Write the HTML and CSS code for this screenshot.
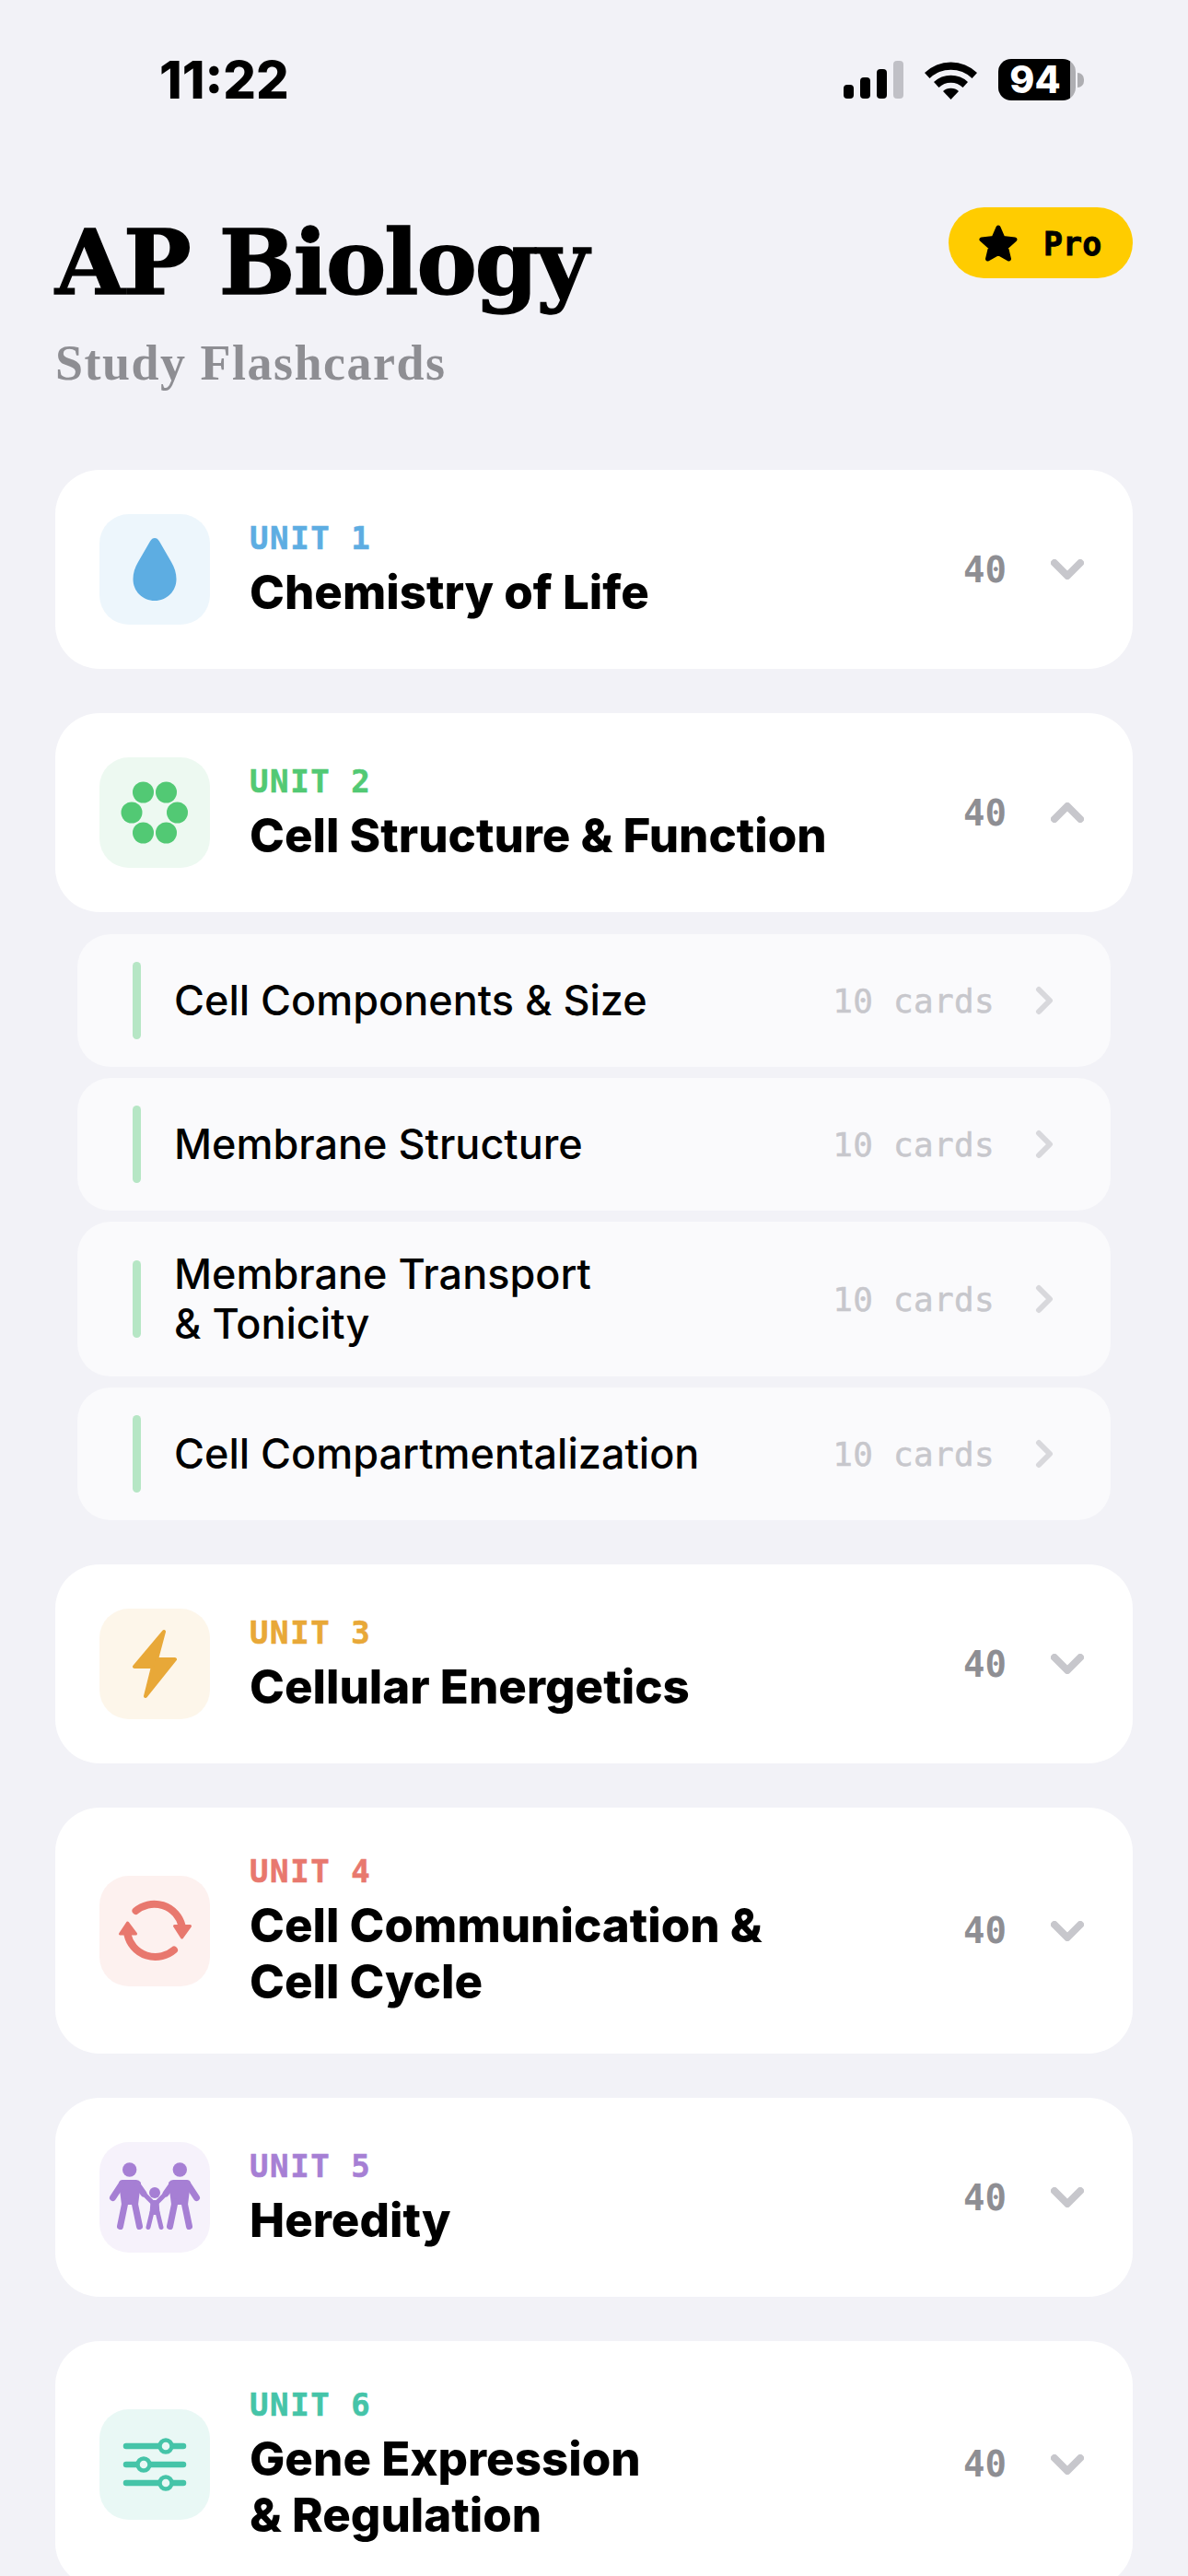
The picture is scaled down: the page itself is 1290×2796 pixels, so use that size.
FILE: index.html
```html
<!DOCTYPE html>
<html lang="en">
<head>
    <meta charset="UTF-8">
    <meta name="viewport" content="width=device-width, initial-scale=1.0">
    <title>AP Biology</title>
    <link rel="stylesheet" href="styles.css">
</head>
<body>
    <div class="status-bar">
        <span class="time">11:22</span>
        <div class="status-icons">
            <svg class="signal" width="65" height="41" viewBox="0 0 65 41">
                <rect x="0" y="26" width="11" height="15" rx="4"/>
                <rect x="18" y="18" width="11" height="23" rx="4"/>
                <rect x="36" y="9" width="11" height="32" rx="4"/>
                <rect x="54" y="0" width="11" height="41" rx="4" fill="#c0c0c6"/>
            </svg>
            <svg class="wifi" width="57" height="42" viewBox="0 0 57 42">
                <path d="M0 13 A41 41 0 0 1 57 13 L51.500 19 A33 33 0 0 0 5.500 19 Z"/>
                <path d="M10 23 A27 27 0 0 1 47 23 L41.500 29 A19 19 0 0 0 15.500 29 Z"/>
                <path d="M20 33 A13 13 0 0 1 37 33 L28.500 42 Z"/>
            </svg>
            <div class="battery"><span class="battery-level">94</span><span class="battery-nub"></span></div>
        </div>
    </div>

    <header class="page-head">
        <div>
            <h1>AP Biology</h1>
            <p class="subtitle">Study Flashcards</p>
        </div>
        <div class="pro-badge">
            <svg width="44" height="42" viewBox="0 0 44 42">
                <path d="M22 4 L27 15.500 L40 17 L30.500 25.500 L33.500 38 L22 31.500 L10.500 38 L13.500 25.500 L4 17 L17 15.500 Z" fill="#000" stroke="#000" stroke-width="5" stroke-linejoin="round"/>
            </svg>
            <span>Pro</span>
        </div>
    </header>

    <main class="units">
        <div class="card unit-blue">
            <div class="icon-box">
                <svg width="120" height="120" viewBox="0 0 120 120">
                    <path d="M60 26 C62 26 63.500 27 65 29.500 L78 52 C81.500 58 83.500 64 83.500 70.500 C83.500 84 73 94 60 94 S36.500 84 36.500 70.500 C36.500 64 38.500 58 42 52 L55 29.500 C56.500 27 58 26 60 26 Z" fill="currentColor"/>
                </svg>
            </div>
            <div class="card-text">
                <div class="unit-label">UNIT 1</div>
                <div class="unit-title">Chemistry of Life</div>
            </div>
            <span class="count">40</span>
            <svg class="chevron" width="36" height="22" viewBox="0 0 36 22"><polyline points="4,4 18,18 32,4"/></svg>
        </div>

        <div class="unit-group">
            <div class="card unit-green">
                <div class="icon-box">
                    <svg width="120" height="120" viewBox="0 0 120 120" fill="currentColor">
                        <circle cx="47.500" cy="38" r="11.500"/>
                        <circle cx="72.500" cy="38" r="11.500"/>
                        <circle cx="35" cy="60" r="11.500"/>
                        <circle cx="84.500" cy="60" r="11.500"/>
                        <circle cx="47.500" cy="82" r="11.500"/>
                        <circle cx="72.500" cy="82" r="11.500"/>
                    </svg>
                </div>
                <div class="card-text">
                    <div class="unit-label">UNIT 2</div>
                    <div class="unit-title">Cell Structure &amp; Function</div>
                </div>
                <span class="count">40</span>
                <svg class="chevron" width="36" height="22" viewBox="0 0 36 22"><polyline points="4,18 18,4 32,18"/></svg>
            </div>

            <div class="topics">
                <div class="topic">
                    <span class="topic-bar"></span>
                    <div class="topic-name">Cell Components &amp; Size</div>
                    <span class="topic-count">10 cards</span>
                    <svg class="topic-chevron" width="20" height="32" viewBox="0 0 20 32"><polyline points="4,4 16,16 4,28"/></svg>
                </div>
                <div class="topic">
                    <span class="topic-bar"></span>
                    <div class="topic-name">Membrane Structure</div>
                    <span class="topic-count">10 cards</span>
                    <svg class="topic-chevron" width="20" height="32" viewBox="0 0 20 32"><polyline points="4,4 16,16 4,28"/></svg>
                </div>
                <div class="topic">
                    <span class="topic-bar"></span>
                    <div class="topic-name">Membrane Transport<br>&amp; Tonicity</div>
                    <span class="topic-count">10 cards</span>
                    <svg class="topic-chevron" width="20" height="32" viewBox="0 0 20 32"><polyline points="4,4 16,16 4,28"/></svg>
                </div>
                <div class="topic">
                    <span class="topic-bar"></span>
                    <div class="topic-name">Cell Compartmentalization</div>
                    <span class="topic-count">10 cards</span>
                    <svg class="topic-chevron" width="20" height="32" viewBox="0 0 20 32"><polyline points="4,4 16,16 4,28"/></svg>
                </div>
            </div>
        </div>

        <div class="card unit-orange">
            <div class="icon-box">
                <svg width="120" height="120" viewBox="0 0 120 120">
                    <path d="M70 25 L38 63 H58 L50 95 L82 55 H62 Z" fill="currentColor" stroke="currentColor" stroke-width="4" stroke-linejoin="round"/>
                </svg>
            </div>
            <div class="card-text">
                <div class="unit-label">UNIT 3</div>
                <div class="unit-title">Cellular Energetics</div>
            </div>
            <span class="count">40</span>
            <svg class="chevron" width="36" height="22" viewBox="0 0 36 22"><polyline points="4,4 18,18 32,4"/></svg>
        </div>

        <div class="card unit-red">
            <div class="icon-box">
                <svg width="120" height="120" viewBox="0 0 120 120" fill="none" stroke="currentColor">
                    <path d="M39.500 38 A31 31 0 0 1 89.500 54" stroke-width="8" stroke-linecap="round"/>
                    <path d="M81 80.500 A31 31 0 0 1 30.500 64" stroke-width="8" stroke-linecap="round"/>
                    <path d="M81.500 54.500 H98.500 L89.500 67 Z" fill="currentColor" stroke-width="3" stroke-linejoin="round"/>
                    <path d="M22.500 63 H39.500 L30.500 51 Z" fill="currentColor" stroke-width="3" stroke-linejoin="round"/>
                </svg>
            </div>
            <div class="card-text">
                <div class="unit-label">UNIT 4</div>
                <div class="unit-title">Cell Communication &amp;<br>Cell Cycle</div>
            </div>
            <span class="count">40</span>
            <svg class="chevron" width="36" height="22" viewBox="0 0 36 22"><polyline points="4,4 18,18 32,4"/></svg>
        </div>

        <div class="card unit-purple">
            <div class="icon-box">
                <svg width="120" height="120" viewBox="0 0 120 120" fill="currentColor" stroke="currentColor" stroke-linecap="round">
                    <circle cx="32.700" cy="30" r="7.700" stroke="none"/>
                    <circle cx="87.300" cy="30" r="7.700" stroke="none"/>
                    <circle cx="60" cy="55" r="6" stroke="none"/>
                    <path d="M25 41 H40 Q43 41 45 44 L42 68 H24 L21 44 Q22 41 25 41 Z" stroke="none"/>
                    <path d="M95 41 H80 Q77 41 75 44 L78 68 H96 L99 44 Q98 41 95 41 Z" stroke="none"/>
                    <path d="M24 46 L14.500 60.500 M41 46 L48 56 M28 65 L22.500 91.500 M38 65 L43.500 91.500" fill="none" stroke-width="7"/>
                    <path d="M96 46 L105.500 60.500 M79 46 L72 56 M92 65 L97.500 91.500 M82 65 L76.500 91.500" fill="none" stroke-width="7"/>
                    <path d="M56.500 64 H63.500 L64.500 78 H55.500 Z" stroke-width="2" stroke-linejoin="round"/>
                    <path d="M50 58 L57 65 M70 58 L63 65 M57 76 L53 92.500 M63 76 L67 92.500" fill="none" stroke-width="5"/>
                </svg>
            </div>
            <div class="card-text">
                <div class="unit-label">UNIT 5</div>
                <div class="unit-title">Heredity</div>
            </div>
            <span class="count">40</span>
            <svg class="chevron" width="36" height="22" viewBox="0 0 36 22"><polyline points="4,4 18,18 32,4"/></svg>
        </div>

        <div class="card unit-teal">
            <div class="icon-box">
                <svg width="120" height="120" viewBox="0 0 120 120" stroke="currentColor" fill="none">
                    <path d="M29 40 H91 M29 60 H91 M29 80 H91" stroke-width="6.500" stroke-linecap="round"/>
                    <circle class="knob" cx="72" cy="40" r="6.500" stroke-width="4.500"/>
                    <circle class="knob" cx="48" cy="60" r="6.500" stroke-width="4.500"/>
                    <circle class="knob" cx="72" cy="80" r="6.500" stroke-width="4.500"/>
                </svg>
            </div>
            <div class="card-text">
                <div class="unit-label">UNIT 6</div>
                <div class="unit-title">Gene Expression<br>&amp; Regulation</div>
            </div>
            <span class="count">40</span>
            <svg class="chevron" width="36" height="22" viewBox="0 0 36 22"><polyline points="4,4 18,18 32,4"/></svg>
        </div>
    </main>
</body>
</html>
```

FILE: styles.css
```css
html, body {
    height: 2796px;
    overflow: hidden;
}
body {
    margin: 0;
    background-color: #f2f2f7;
    font-family: Inter, "Liberation Sans", sans-serif;
    color: #000;
}
.status-bar {
    display: flex;
    justify-content: space-between;
    align-items: center;
    height: 45px;
    padding: 64px 113px 0 173px;
}
.time {
    font-size: 56px;
    font-weight: 800;
    line-height: 45px;
    padding-top: 2px;
}
.status-icons {
    display: flex;
    align-items: center;
    gap: 23px;
}
.battery {
    display: flex;
    align-items: center;
    gap: 2px;
}
.battery-level {
    width: 84px;
    height: 45px;
    border-radius: 14px;
    background: linear-gradient(90deg, #000 93%, #aeaeb2 93%);
    color: #fff;
    font-size: 41px;
    font-weight: 800;
    line-height: 45px;
    text-align: center;
    text-indent: -4px;
}
.battery-nub {
    width: 7px;
    height: 16px;
    border-radius: 0 8px 8px 0;
    background-color: #aeaeb2;
}
.page-head {
    display: flex;
    justify-content: space-between;
    align-items: flex-start;
    padding: 116px 60px 0;
}
h1 {
    margin: 0;
    font-family: "DejaVu Serif", serif;
    font-size: 98px;
    font-weight: 700;
    line-height: 120px;
    letter-spacing: -2px;
    -webkit-text-stroke: 1.5px #000;
}
.subtitle {
    margin: 18px 0 0;
    font-family: "Liberation Serif", serif;
    font-size: 54px;
    font-weight: 700;
    line-height: 62px;
    letter-spacing: 1.500px;
    color: #8e8e93;
}
.pro-badge {
    display: flex;
    align-items: center;
    gap: 27px;
    box-sizing: border-box;
    width: 200px;
    height: 77px;
    padding-left: 32px;
    border-radius: 39px;
    background-color: #ffcc00;
    font-family: "DejaVu Sans Mono", monospace;
    font-size: 35px;
    font-weight: 700;
    -webkit-text-stroke: 0.8px #000;
}
.pro-badge span {
    margin-top: 3px;
}
.units {
    display: flex;
    flex-direction: column;
    gap: 48px;
    padding: 0 60px;
    margin-top: 85px;
}
.card {
    display: flex;
    align-items: center;
    padding: 48px 53px 48px 48px;
    border-radius: 48px;
    background-color: #fff;
}
.icon-box {
    flex: none;
    width: 120px;
    height: 120px;
    border-radius: 32px;
}
.icon-box svg {
    display: block;
}
.card-text {
    flex: 1;
    margin-left: 43px;
}
.unit-label {
    margin-bottom: 6px;
    font-family: "DejaVu Sans Mono", monospace;
    font-size: 34px;
    font-weight: 700;
    line-height: 43px;
    letter-spacing: 1.6px;
    -webkit-text-stroke: 0.6px currentColor;
}
.unit-title {
    font-size: 51px;
    font-weight: 800;
    line-height: 61px;
}
.count {
    margin-right: 48px;
    font-family: "DejaVu Sans Mono", monospace;
    font-size: 39px;
    font-weight: 700;
    color: #8e8e93;
}
.chevron {
    flex: none;
    fill: none;
    stroke: #c7c7cc;
    stroke-width: 8;
    stroke-linecap: round;
    stroke-linejoin: round;
}
.unit-blue .icon-box { background-color: #edf6fc; }
.unit-blue .icon-box, .unit-blue .unit-label { color: #5dade2; }
.unit-green .icon-box { background-color: #edf9f1; }
.unit-green .icon-box, .unit-green .unit-label { color: #52c974; }
.unit-orange .icon-box { background-color: #fdf6ea; }
.unit-orange .icon-box, .unit-orange .unit-label { color: #e8a838; }
.unit-red .icon-box { background-color: #fdf1ef; }
.unit-red .icon-box, .unit-red .unit-label { color: #e8786e; }
.unit-purple .icon-box { background-color: #f6f2fb; }
.unit-purple .icon-box, .unit-purple .unit-label { color: #a67fd4; }
.unit-teal .icon-box { background-color: #e9f8f5; }
.unit-teal .icon-box, .unit-teal .unit-label { color: #45c4a8; }
.knob {
    fill: #e9f8f5;
}
.topics {
    display: flex;
    flex-direction: column;
    gap: 12px;
    margin: 24px 24px 0;
}
.topic {
    display: flex;
    align-items: center;
    padding: 30px 62px 30px 60px;
    border-radius: 36px;
    background-color: #fafafc;
}
.topic-bar {
    flex: none;
    width: 9px;
    height: 84px;
    border-radius: 5px;
    background-color: #b6e6c5;
}
.topic-name {
    flex: 1;
    margin-left: 36px;
    font-size: 45px;
    font-weight: 500;
    line-height: 54px;
}
.topic-count {
    margin-right: 44px;
    font-family: "DejaVu Sans Mono", monospace;
    font-size: 36px;
    letter-spacing: 0.3px;
    color: #c7c7cc;
    -webkit-text-stroke: 0.5px #c7c7cc;
}
.topic-chevron {
    flex: none;
    fill: none;
    stroke: #d8d8dc;
    stroke-width: 6;
    stroke-linecap: round;
    stroke-linejoin: round;
}
```
